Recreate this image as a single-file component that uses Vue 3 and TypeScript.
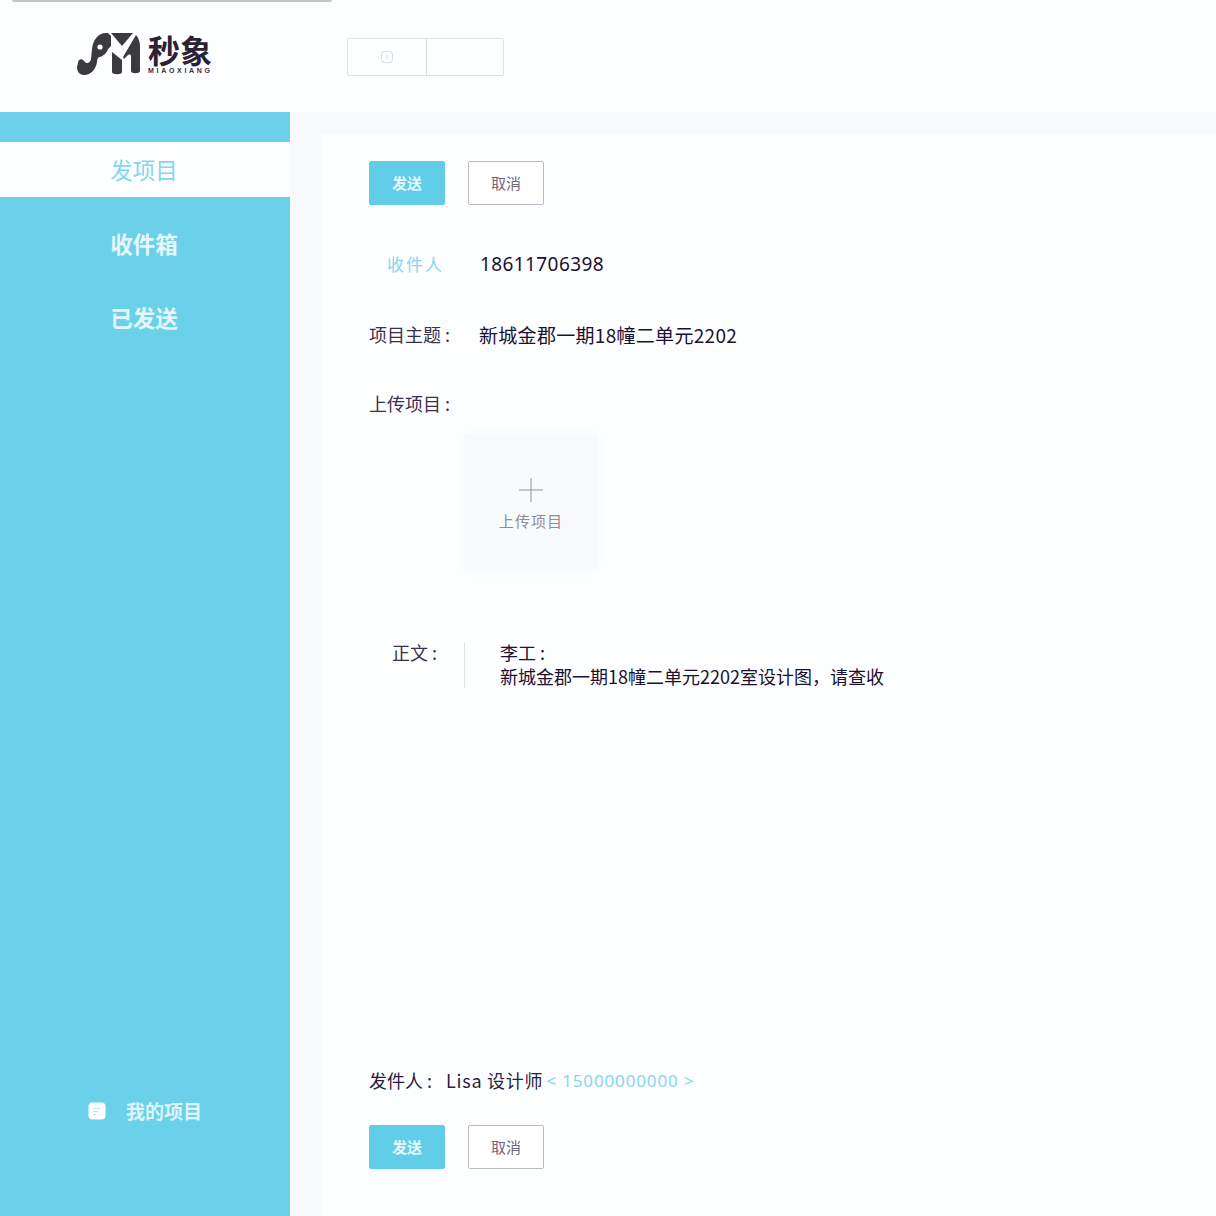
<template>
  <div class="page">
    <div class="loadbar"></div>
    <header class="topbar">
      <div class="logo">
        <svg class="mark" width="75" height="52" viewBox="0 0 75 52">
          <path d="M6 35c0-4 4-5 6-2 2 3 6 3 7-2l1-10C21 12 26 5 34 5h2l3 3v10l-3 3c-1 4-5 7-8 8-2 0-3 2-3 5-1 7-6 13-13 13-5 0-7-4-7-8Z" fill="#3b3a3f" />
          <circle cx="28" cy="19" r="2.6" fill="#fff" />
          <path d="M39 5h22L50 18Z" fill="#3b3a3f" />
          <path d="M40 24l10 8v12c0 3-10 3-10 0Z" fill="#3b3a3f" />
          <path d="M64 7c3 3 4 8 4 12v24c0 3-9 3-9 0V28c0-1-1-2-3-1l-4 4-1-2Z" fill="#3b3a3f" />
        </svg>
        <div class="brand">
          <span class="brand-cn">秒象</span>
          <span class="brand-en">MIAOXIANG</span>
        </div>
      </div>
      <div class="switch">
        <div class="switch-cell first">
          <svg width="14" height="14" viewBox="0 0 14 14">
            <rect x="1.5" y="1.5" width="11" height="11" rx="3" fill="none" stroke="#d5dbe0" />
            <path d="M7 5v4" stroke="#d5dbe0" />
          </svg>
        </div>
        <div class="switch-cell"></div>
      </div>
    </header>

    <div class="body">
      <aside class="sidebar">
        <nav class="menu">
          <a
            v-for="item in menu"
            :key="item"
            class="menu-item"
            :class="{ active: item === current }"
          >{{ item }}</a>
        </nav>
        <div class="mine">
          <svg width="18" height="18" viewBox="0 0 18 18">
            <rect x="0.5" y="0.5" width="17" height="17" rx="4" fill="#fff" />
            <path d="M5 6.5h7M5 9.5h5M5 12.5h3" stroke="#b9e6f3" stroke-width="1.2" />
          </svg>
          <span>我的项目</span>
        </div>
      </aside>

      <main class="content">
        <section class="card">
          <div class="actions">
            <button class="btn primary">发送</button>
            <button class="btn">取消</button>
          </div>

          <div class="row to">
            <span class="label blue">收件人</span>
            <span class="value phone">18611706398</span>
          </div>
          <div class="row subject">
            <span class="label">项目主题 :</span>
            <span class="value">{{ subject }}</span>
          </div>
          <div class="row upload-label">
            <span class="label">上传项目 :</span>
          </div>

          <div class="uploader">
            <svg width="26" height="26" viewBox="0 0 26 26">
              <path d="M13 1v24M1 13h24" stroke="#8d93a0" stroke-width="1" />
            </svg>
            <span>上传项目</span>
          </div>

          <div class="letter">
            <span class="letter-label">正文 :</span>
            <div class="letter-text">
              <p>李工 :</p>
              <p>{{ subject }}室设计图，请查收</p>
            </div>
          </div>

          <div class="sender">
            <span>发件人 :</span>
            <span class="sender-name">Lisa 设计师</span>
            <span class="blue sender-phone">&lt; 15000000000 &gt;</span>
          </div>
          <div class="actions bottom">
            <button class="btn primary">发送</button>
            <button class="btn">取消</button>
          </div>
        </section>
      </main>
    </div>
  </div>
</template>

<script setup lang="ts">
const menu: string[] = ["发项目", "收件箱", "已发送"];
const current = "发项目";
const subject = "新城金郡一期18幢二单元2202";
</script>

<style>
html,
body {
  margin: 0;
  background: #fdfeff;
}
</style>

<style scoped>
.page {
  width: 1216px;
  height: 1216px;
  overflow: hidden;
  position: relative;
  background: #fdfeff;
  color: #20143a;
  font-family: "Noto Sans CJK SC", "Noto Sans", sans-serif;
  font-size: 18px;
}

.loadbar {
  position: absolute;
  top: 0;
  left: 12px;
  width: 320px;
  height: 2px;
  background: #c3c6c2;
  border-radius: 0 0 3px 3px;
}

.topbar {
  height: 112px;
  display: flex;
  align-items: flex-start;
  background: #fdfeff;
}

.logo {
  display: flex;
  align-items: flex-start;
  width: 347px;
  padding: 28px 0 0 72px;
  box-sizing: border-box;
  flex: none;
}

.brand {
  display: flex;
  flex-direction: column;
  margin: 6px 0 0 1px;
}

.brand-cn {
  font-size: 32px;
  line-height: 30px;
  font-weight: 700;
  color: #2b2233;
  white-space: nowrap;
}

.brand-en {
  font-family: "Liberation Sans", sans-serif;
  font-size: 7px;
  line-height: 8px;
  font-weight: 700;
  letter-spacing: 2.7px;
  color: #3a2d4a;
  margin-top: 3px;
}

.switch {
  display: flex;
  margin-top: 38px;
  height: 38px;
  width: 157px;
  border: 1px solid #dfe4e9;
  border-radius: 2px;
  box-sizing: border-box;
}

.switch-cell {
  flex: 1;
  display: flex;
  align-items: center;
  justify-content: center;
}

.switch-cell.first {
  flex: none;
  width: 78px;
  border-right: 1px solid #d4dade;
}

.body {
  display: flex;
  height: 1104px;
}

.sidebar {
  width: 290px;
  flex: none;
  background: #6bd1ea;
  display: flex;
  flex-direction: column;
  padding-top: 30px;
  box-sizing: border-box;
}

.menu {
  display: flex;
  flex-direction: column;
  gap: 19px;
}

.menu-item {
  height: 55px;
  line-height: 54px;
  padding-right: 2px;
  text-align: center;
  color: #e4f7fb;
  font-size: 22.5px;
  font-weight: 700;
}

.menu-item.active {
  background: #fdfeff;
  color: #84d6ef;
  font-weight: 400;
}

.mine {
  margin-top: auto;
  margin-bottom: 92px;
  display: flex;
  align-items: center;
  padding-left: 88px;
  gap: 20px;
  color: #dff5fa;
  font-size: 19px;
  font-weight: 700;
}

.content {
  flex: 1;
  background: #f9fafb;
  padding: 22px 0 0 32px;
  box-sizing: border-box;
  min-width: 0;
}

.card {
  height: 1082px;
  background: #fdfeff;
  padding: 27px 0 0 47px;
  box-sizing: border-box;
}

.actions {
  display: flex;
  gap: 23px;
}

.actions.bottom {
  margin-top: 31px;
}

.btn {
  width: 76px;
  height: 44px;
  padding: 0 0 2px;
  border: 1px solid #b9bcc4;
  border-radius: 2px;
  background: #fff;
  color: #6f6580;
  font-family: inherit;
  font-size: 15px;
}

.btn.primary {
  border-color: #62cde8;
  background: #62cde8;
  color: #e4f7fb;
  font-weight: 700;
}

.row {
  display: flex;
  align-items: center;
  height: 28px;
}

.row.to {
  margin-top: 45px;
}

.row.subject {
  margin-top: 42px;
}

.row.upload-label {
  margin-top: 41px;
}

.label {
  width: 110px;
  flex: none;
  font-size: 18px;
  color: #3a2f4d;
  white-space: nowrap;
}

.row.to .label {
  padding: 0 0 2px 18px;
  width: 92px;
  font-size: 17px;
  letter-spacing: 2px;
}

.blue {
  color: #86d6f0;
}

.row .label.blue {
  color: #86d6f0;
}

.value {
  font-size: 19px;
  letter-spacing: 0.3px;
  color: #1c1030;
  white-space: nowrap;
}

.phone {
  font-family: "Noto Sans", sans-serif;
  letter-spacing: 0.4px;
  margin-left: 1px;
}

.uploader {
  width: 134px;
  height: 136px;
  margin: 17px 0 0 95px;
  background: #f9fafc;
  box-shadow: 0 0 14px #f9fafc;
  display: flex;
  flex-direction: column;
  align-items: center;
  padding-top: 43px;
  box-sizing: border-box;
  gap: 7px;
  color: #8d8a9e;
  font-size: 15px;
  letter-spacing: 1.1px;
}

.letter {
  display: flex;
  align-items: flex-start;
  margin-top: 71px;
}

.letter-label {
  width: 95px;
  flex: none;
  padding-left: 23px;
  box-sizing: border-box;
  line-height: 24px;
  margin-top: -1px;
  color: #3a2f4d;
  white-space: nowrap;
}

.letter-text {
  border-left: 1px solid #dde3e8;
  padding-left: 35px;
  height: 46px;
  margin-top: 1px;
  font-size: 18px;
  line-height: 24px;
  color: #1c1030;
  white-space: nowrap;
}

.letter-text p {
  margin: 0;
  position: relative;
  top: -2px;
}

.sender {
  display: flex;
  align-items: center;
  gap: 14px;
  margin-top: 378px;
  height: 28px;
  font-size: 18px;
  color: #2a1d40;
  white-space: nowrap;
}

.sender-name {
  letter-spacing: 0.75px;
}

.sender-phone {
  margin-left: -11px;
  font-family: "Noto Sans", sans-serif;
  font-size: 17px;
  letter-spacing: 0.85px;
}
</style>
